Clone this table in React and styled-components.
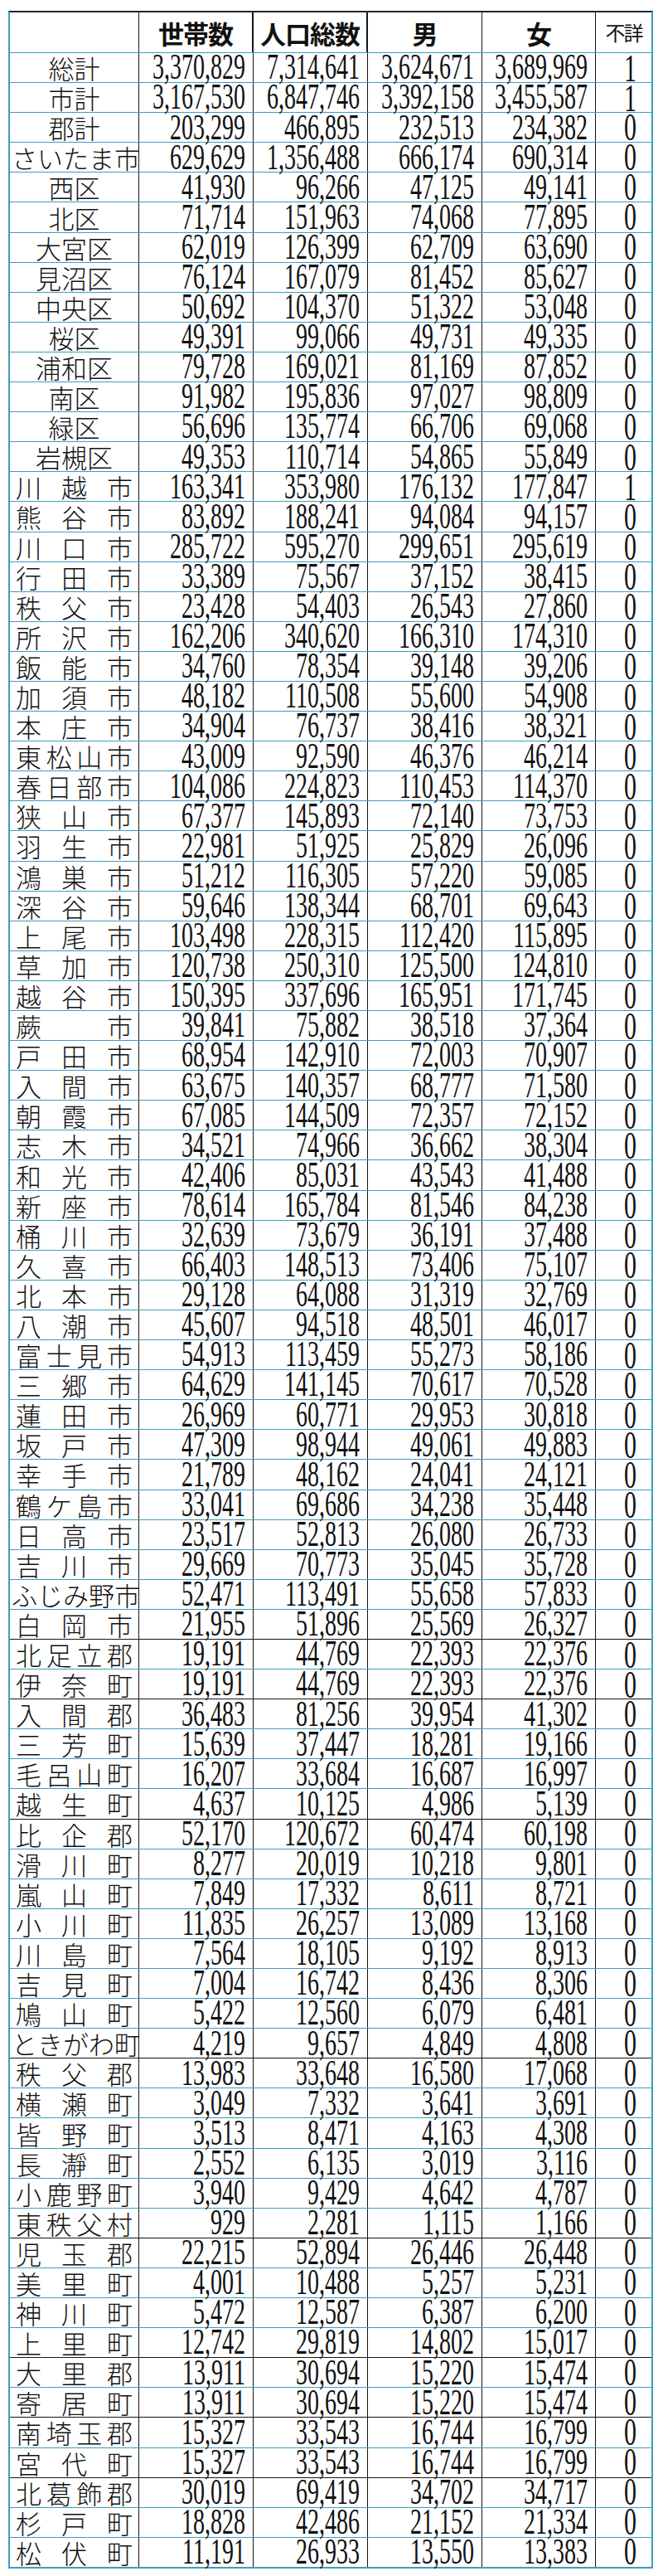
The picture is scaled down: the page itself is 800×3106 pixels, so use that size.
import React from 'react'
import styled, { createGlobalStyle } from 'styled-components'

const TEAL = '#3f9dbf'
const INK = '#161616'

const GlobalStyle = createGlobalStyle`
  html, body {
    margin: 0;
    padding: 0;
    background: #fff;
  }
`

const Sheet = styled.div`
  padding: 13px 12px 10px 10px;
`

const Table = styled.div`
  width: 778px;
  box-sizing: border-box;
  border-top: 2px solid #1c2833;
  border-left: 2px solid ${TEAL};
  border-right: 2px solid ${TEAL};
  border-bottom: 2px solid ${TEAL};
`

const Row = styled.div`
  display: grid;
  grid-template-columns: 156px 138px 138px 138px 137px 1fr;
  box-sizing: border-box;
  height: ${p => (p.$head ? '48px' : '36.1px')};
  border-top: ${p => (p.$head ? 'none' : `1.5px solid ${p.$group ? INK : TEAL}`)};
`

const Cell = styled.div`
  box-sizing: border-box;
  display: flex;
  align-items: center;
  color: #111;
  border-right: 1.5px solid ${INK};
  &:last-child {
    border-right: none;
  }
`

const HeadCell = styled(Cell)`
  justify-content: center;
  font-family: "Noto Sans CJK JP", sans-serif;
  font-size: ${p => (p.$small ? '24px' : '31px')};
  font-weight: ${p => (p.$small ? 400 : 700)};
  line-height: 1;
  letter-spacing: ${p => (p.$small ? '-2px' : '-1px')};
  border-right-width: ${p => (p.$thick ? '2.5px' : '1.5px')};
`

const NameCell = styled(Cell)`
  justify-content: ${p => (p.$spread ? 'space-between' : 'center')};
  padding: 0 ${p => p.$pad || 0}px;
  font-family: "Noto Sans CJK JP", sans-serif;
  font-weight: 300;
  font-size: 31px;
  line-height: 1;
`

const Glyph = styled.span`
  display: inline-block;
`

const NumCell = styled(Cell)`
  justify-content: flex-end;
  padding-right: ${p => (p.$unk ? 18 : 9)}px;
  font-family: "Liberation Serif", "Times New Roman", serif;
  font-size: ${p => (p.$unk ? 30 : 28)}px;
  line-height: 0.8;
`

const Digits = styled.span`
  display: inline-block;
  transform: scaleY(1.55);
`

// [名前, 世帯数, 人口総数, 男, 女, 不詳, 郡の区切り]
const rows = [
  ['総計', '3,370,829', '7,314,641', '3,624,671', '3,689,969', '1'],
  ['市計', '3,167,530', '6,847,746', '3,392,158', '3,455,587', '1'],
  ['郡計', '203,299', '466,895', '232,513', '234,382', '0'],
  ['さいたま市', '629,629', '1,356,488', '666,174', '690,314', '0'],
  ['西区', '41,930', '96,266', '47,125', '49,141', '0'],
  ['北区', '71,714', '151,963', '74,068', '77,895', '0'],
  ['大宮区', '62,019', '126,399', '62,709', '63,690', '0'],
  ['見沼区', '76,124', '167,079', '81,452', '85,627', '0'],
  ['中央区', '50,692', '104,370', '51,322', '53,048', '0'],
  ['桜区', '49,391', '99,066', '49,731', '49,335', '0'],
  ['浦和区', '79,728', '169,021', '81,169', '87,852', '0'],
  ['南区', '91,982', '195,836', '97,027', '98,809', '0'],
  ['緑区', '56,696', '135,774', '66,706', '69,068', '0'],
  ['岩槻区', '49,353', '110,714', '54,865', '55,849', '0'],
  ['川越市', '163,341', '353,980', '176,132', '177,847', '1'],
  ['熊谷市', '83,892', '188,241', '94,084', '94,157', '0'],
  ['川口市', '285,722', '595,270', '299,651', '295,619', '0'],
  ['行田市', '33,389', '75,567', '37,152', '38,415', '0'],
  ['秩父市', '23,428', '54,403', '26,543', '27,860', '0'],
  ['所沢市', '162,206', '340,620', '166,310', '174,310', '0'],
  ['飯能市', '34,760', '78,354', '39,148', '39,206', '0'],
  ['加須市', '48,182', '110,508', '55,600', '54,908', '0'],
  ['本庄市', '34,904', '76,737', '38,416', '38,321', '0'],
  ['東松山市', '43,009', '92,590', '46,376', '46,214', '0'],
  ['春日部市', '104,086', '224,823', '110,453', '114,370', '0'],
  ['狭山市', '67,377', '145,893', '72,140', '73,753', '0'],
  ['羽生市', '22,981', '51,925', '25,829', '26,096', '0'],
  ['鴻巣市', '51,212', '116,305', '57,220', '59,085', '0'],
  ['深谷市', '59,646', '138,344', '68,701', '69,643', '0'],
  ['上尾市', '103,498', '228,315', '112,420', '115,895', '0'],
  ['草加市', '120,738', '250,310', '125,500', '124,810', '0'],
  ['越谷市', '150,395', '337,696', '165,951', '171,745', '0'],
  ['蕨市', '39,841', '75,882', '38,518', '37,364', '0'],
  ['戸田市', '68,954', '142,910', '72,003', '70,907', '0'],
  ['入間市', '63,675', '140,357', '68,777', '71,580', '0'],
  ['朝霞市', '67,085', '144,509', '72,357', '72,152', '0'],
  ['志木市', '34,521', '74,966', '36,662', '38,304', '0'],
  ['和光市', '42,406', '85,031', '43,543', '41,488', '0'],
  ['新座市', '78,614', '165,784', '81,546', '84,238', '0'],
  ['桶川市', '32,639', '73,679', '36,191', '37,488', '0'],
  ['久喜市', '66,403', '148,513', '73,406', '75,107', '0'],
  ['北本市', '29,128', '64,088', '31,319', '32,769', '0'],
  ['八潮市', '45,607', '94,518', '48,501', '46,017', '0'],
  ['富士見市', '54,913', '113,459', '55,273', '58,186', '0'],
  ['三郷市', '64,629', '141,145', '70,617', '70,528', '0'],
  ['蓮田市', '26,969', '60,771', '29,953', '30,818', '0'],
  ['坂戸市', '47,309', '98,944', '49,061', '49,883', '0'],
  ['幸手市', '21,789', '48,162', '24,041', '24,121', '0'],
  ['鶴ケ島市', '33,041', '69,686', '34,238', '35,448', '0'],
  ['日高市', '23,517', '52,813', '26,080', '26,733', '0'],
  ['吉川市', '29,669', '70,773', '35,045', '35,728', '0'],
  ['ふじみ野市', '52,471', '113,491', '55,658', '57,833', '0'],
  ['白岡市', '21,955', '51,896', '25,569', '26,327', '0'],
  ['北足立郡', '19,191', '44,769', '22,393', '22,376', '0', true],
  ['伊奈町', '19,191', '44,769', '22,393', '22,376', '0'],
  ['入間郡', '36,483', '81,256', '39,954', '41,302', '0', true],
  ['三芳町', '15,639', '37,447', '18,281', '19,166', '0'],
  ['毛呂山町', '16,207', '33,684', '16,687', '16,997', '0'],
  ['越生町', '4,637', '10,125', '4,986', '5,139', '0'],
  ['比企郡', '52,170', '120,672', '60,474', '60,198', '0', true],
  ['滑川町', '8,277', '20,019', '10,218', '9,801', '0'],
  ['嵐山町', '7,849', '17,332', '8,611', '8,721', '0'],
  ['小川町', '11,835', '26,257', '13,089', '13,168', '0'],
  ['川島町', '7,564', '18,105', '9,192', '8,913', '0'],
  ['吉見町', '7,004', '16,742', '8,436', '8,306', '0'],
  ['鳩山町', '5,422', '12,560', '6,079', '6,481', '0'],
  ['ときがわ町', '4,219', '9,657', '4,849', '4,808', '0'],
  ['秩父郡', '13,983', '33,648', '16,580', '17,068', '0', true],
  ['横瀬町', '3,049', '7,332', '3,641', '3,691', '0'],
  ['皆野町', '3,513', '8,471', '4,163', '4,308', '0'],
  ['長瀞町', '2,552', '6,135', '3,019', '3,116', '0'],
  ['小鹿野町', '3,940', '9,429', '4,642', '4,787', '0'],
  ['東秩父村', '929', '2,281', '1,115', '1,166', '0'],
  ['児玉郡', '22,215', '52,894', '26,446', '26,448', '0', true],
  ['美里町', '4,001', '10,488', '5,257', '5,231', '0'],
  ['神川町', '5,472', '12,587', '6,387', '6,200', '0'],
  ['上里町', '12,742', '29,819', '14,802', '15,017', '0'],
  ['大里郡', '13,911', '30,694', '15,220', '15,474', '0', true],
  ['寄居町', '13,911', '30,694', '15,220', '15,474', '0'],
  ['南埼玉郡', '15,327', '33,543', '16,744', '16,799', '0', true],
  ['宮代町', '15,327', '33,543', '16,744', '16,799', '0'],
  ['北葛飾郡', '30,019', '69,419', '34,702', '34,717', '0', true],
  ['杉戸町', '18,828', '42,486', '21,152', '21,334', '0'],
  ['松伏町', '11,191', '26,933', '13,550', '13,383', '0'],
]

// 先頭の集計とさいたま市の区は中央寄せ、それ以外は均等割り
const isCentered = (name, i) => i < 14 && name !== 'さいたま市'

function Name({ name, index }) {
  if (isCentered(name, index)) {
    return <NameCell>{name}</NameCell>
  }
  const chars = [...name]
  return (
    <NameCell $spread $pad={chars.length >= 5 ? 2 : 7}>
      {chars.map((c, i) => <Glyph key={i}>{c}</Glyph>)}
    </NameCell>
  )
}

export default function App() {
  return (
    <Sheet>
      <GlobalStyle />
      <Table>
        <Row $head>
          <HeadCell />
          <HeadCell $thick>世帯数</HeadCell>
          <HeadCell $thick>人口総数</HeadCell>
          <HeadCell>男</HeadCell>
          <HeadCell>女</HeadCell>
          <HeadCell $small>不詳</HeadCell>
        </Row>
        {rows.map(([name, hh, total, male, female, unk, group], i) => (
          <Row key={name + i} $group={group}>
            <Name name={name} index={i} />
            <NumCell><Digits>{hh}</Digits></NumCell>
            <NumCell><Digits>{total}</Digits></NumCell>
            <NumCell><Digits>{male}</Digits></NumCell>
            <NumCell><Digits>{female}</Digits></NumCell>
            <NumCell $unk><Digits>{unk}</Digits></NumCell>
          </Row>
        ))}
      </Table>
    </Sheet>
  )
}
